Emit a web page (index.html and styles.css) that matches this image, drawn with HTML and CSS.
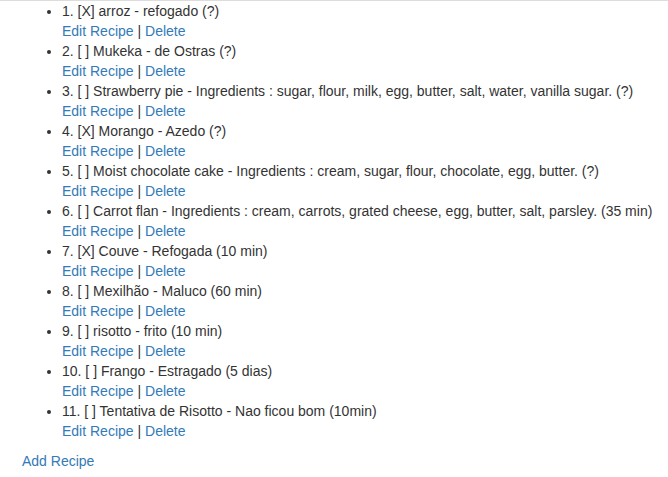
FILE: index.html
```html
<!DOCTYPE html>
<html>
<head>
<meta charset="utf-8">
<link rel="stylesheet" href="styles.css">
</head>
<body>
<div class="page">
  <ul class="recipes">
    <li><div>1. [X] arroz - refogado (?)</div><div><a href="#">Edit Recipe</a> | <a href="#">Delete</a></div></li>
    <li><div>2. [ ] Mukeka - de Ostras (?)</div><div><a href="#">Edit Recipe</a> | <a href="#">Delete</a></div></li>
    <li><div>3. [ ] Strawberry pie - Ingredients : sugar, flour, milk, egg, butter, salt, water, vanilla sugar. (?)</div><div><a href="#">Edit Recipe</a> | <a href="#">Delete</a></div></li>
    <li><div>4. [X] Morango - Azedo (?)</div><div><a href="#">Edit Recipe</a> | <a href="#">Delete</a></div></li>
    <li><div>5. [ ] Moist chocolate cake - Ingredients : cream, sugar, flour, chocolate, egg, butter. (?)</div><div><a href="#">Edit Recipe</a> | <a href="#">Delete</a></div></li>
    <li><div>6. [ ] Carrot flan - Ingredients : cream, carrots, grated cheese, egg, butter, salt, parsley. (35 min)</div><div><a href="#">Edit Recipe</a> | <a href="#">Delete</a></div></li>
    <li><div>7. [X] Couve - Refogada (10 min)</div><div><a href="#">Edit Recipe</a> | <a href="#">Delete</a></div></li>
    <li><div>8. [ ] Mexilhão - Maluco (60 min)</div><div><a href="#">Edit Recipe</a> | <a href="#">Delete</a></div></li>
    <li><div>9. [ ] risotto - frito (10 min)</div><div><a href="#">Edit Recipe</a> | <a href="#">Delete</a></div></li>
    <li><div>10. [ ] Frango - Estragado (5 dias)</div><div><a href="#">Edit Recipe</a> | <a href="#">Delete</a></div></li>
    <li><div>11. [ ] Tentativa de Risotto - Nao ficou bom (10min)</div><div><a href="#">Edit Recipe</a> | <a href="#">Delete</a></div></li>
  </ul>
  <a href="#" class="add">Add Recipe</a>
</div>
</body>
</html>
```
FILE: styles.css
```css
html, body {
  margin: 0;
  padding: 0;
  background: #fff;
}
body {
  font-family: "Liberation Sans", Arial, sans-serif;
  font-size: 14px;
  line-height: 20px;
  color: #333;
}
.page {
  border-top: 1px solid #ddd;
  padding-left: 22px;
}
.recipes {
  margin: 0 0 10px 0;
  padding-left: 40px;
}
a {
  color: #337ab7;
  text-decoration: none;
}
.add {
  display: inline-block;
}
```
